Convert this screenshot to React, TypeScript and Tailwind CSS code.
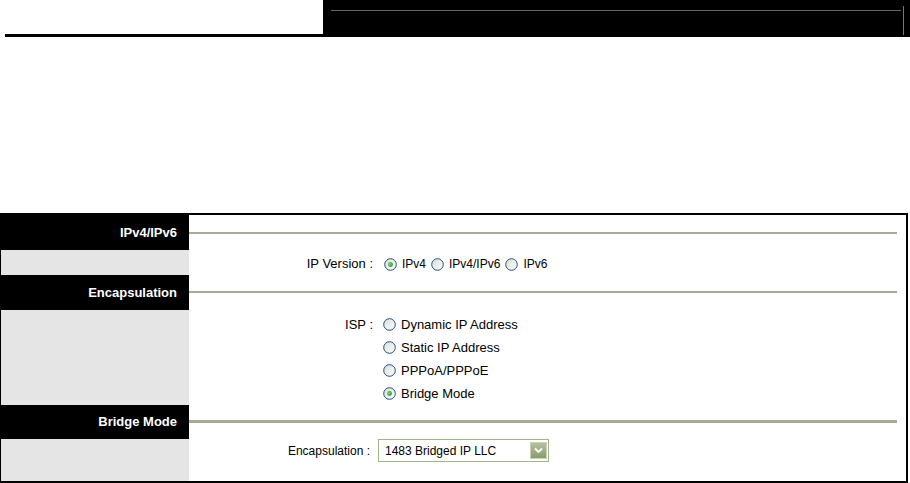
import React from "react";

function Radio({ checked }: { checked?: boolean }) {
  return (
    <svg width="13" height="13" viewBox="0 0 13 13" className="shrink-0">
      <defs>
        <linearGradient id="rg" x1="0" y1="0" x2="1" y2="1">
          <stop offset="0" stopColor="#dcdcd5" />
          <stop offset="1" stopColor="#ffffff" />
        </linearGradient>
        <radialGradient id="dg" cx="0.4" cy="0.4" r="0.6">
          <stop offset="0" stopColor="#7be07b" />
          <stop offset="1" stopColor="#1e9e1e" />
        </radialGradient>
      </defs>
      <circle cx="6.5" cy="6.5" r="5.8" fill="url(#rg)" stroke="#1c5180" strokeWidth="1" />
      {checked && <circle cx="6.5" cy="6.5" r="2.4" fill="url(#dg)" />}
    </svg>
  );
}

function HeaderRow({ label, h, lineTop, lineH }: { label: string; h: string; lineTop: string; lineH: string }) {
  return (
    <div className={`flex ${h}`}>
      <div className="w-[188px] bg-black flex items-center justify-end pr-[12px] text-white font-bold text-[13px]">
        {label}
      </div>
      <div className="flex-1 pr-[9px]">
        <div className={`${lineTop} ${lineH} bg-[#aca899]`} />
      </div>
    </div>
  );
}

export default function App() {
  return (
    <div className="w-[910px] h-[483px] bg-white overflow-hidden font-['Liberation_Sans',Arial,sans-serif] text-[13px] text-black">
      {/* top header */}
      <div className="flex h-[37px]">
        <div className="w-[323px] flex flex-col justify-end pl-[5px]">
          <div className="h-[3px] bg-black" />
        </div>
        <div className="flex-1 bg-black flex">
          <div className="flex-1 pl-[8px] pt-[10px]">
            <div className="h-[1px] bg-[#666666]" />
          </div>
          <div className="w-[9px] flex justify-start pl-[2px] pt-[6px] pb-[2px]">
            <div className="w-[1px] bg-[#777777]" />
          </div>
        </div>
      </div>

      <div className="h-[176px]" />

      {/* panel */}
      <div className="w-[908px] h-[270px] border-t-2 border-r-2 border-b-2 border-l border-black flex flex-col">
        <HeaderRow label="IPv4/IPv6" h="h-[35px]" lineTop="mt-[17px]" lineH="h-[2px]" />
        <div className="flex h-[25px]">
          <div className="w-[188px] bg-[#e5e5e5]" />
          <div className="flex-1 flex items-center pt-[3px]">
            <div className="w-[188px] text-right pr-[4px]">IP Version :</div>
            <div className="flex items-center pl-[7px] text-[12px]">
              <Radio checked />
              <span className="ml-[5px]">IPv4</span>
              <span className="ml-[5px] flex"><Radio /></span>
              <span className="ml-[5px]">IPv4/IPv6</span>
              <span className="ml-[5px] flex"><Radio /></span>
              <span className="ml-[5px]">IPv6</span>
            </div>
          </div>
        </div>
        <HeaderRow label="Encapsulation" h="h-[35px]" lineTop="mt-[16px]" lineH="h-[2px]" />
        <div className="flex h-[95px]">
          <div className="w-[188px] bg-[#e5e5e5]" />
          <div className="flex-1 flex pt-[3px]">
            <div className="w-[188px] text-right pr-[4px] h-[23px] flex items-center justify-end">ISP :</div>
            <div className="flex flex-col pl-[6px]">
              {[
                ["Dynamic IP Address", false],
                ["Static IP Address", false],
                ["PPPoA/PPPoE", false],
                ["Bridge Mode", true],
              ].map(([t, c]) => (
                <div key={t as string} className="h-[23px] flex items-center">
                  <Radio checked={c as boolean} />
                  <span className="ml-[5px]">{t as string}</span>
                </div>
              ))}
            </div>
          </div>
        </div>
        <HeaderRow label="Bridge Mode" h="h-[34px]" lineTop="mt-[15px]" lineH="h-[3px]" />
        <div className="flex flex-1">
          <div className="w-[188px] bg-[#e5e5e5]" />
          <div className="flex-1 flex items-start text-[12px]">
            <div className="w-[188px] text-right pr-[7px] h-[23px] flex items-center justify-end">Encapsulation :</div>
            <div className="ml-[1px] w-[171px] h-[23px] border border-[#a3b38a] bg-white flex items-center justify-between pl-[6px] pr-[1px]">
              <span>1483 Bridged IP LLC</span>
              <div className="w-[17px] h-[17px] bg-gradient-to-b from-[#b3c19c] to-[#8b9c70] border border-[#c8d2b8] flex items-center justify-center">
                <svg width="9" height="7" viewBox="0 0 9 7">
                  <path d="M1 1.5 L4.5 5 L8 1.5" fill="none" stroke="#ffffff" strokeWidth="1.8" />
                </svg>
              </div>
            </div>
          </div>
        </div>
      </div>
    </div>
  );
}
